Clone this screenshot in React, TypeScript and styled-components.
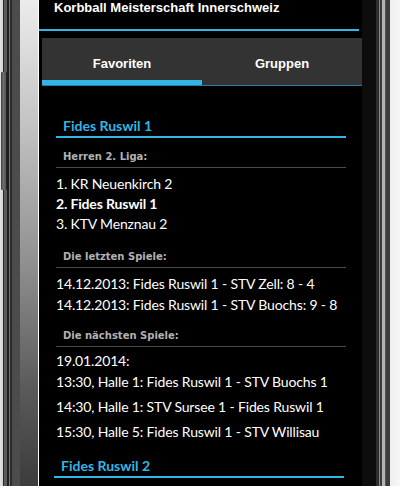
import React from "react";
import styled, { createGlobalStyle } from "styled-components";

const Global = createGlobalStyle`
  html, body { margin: 0; padding: 0; background: #ffffff; }
  body { width: 400px; height: 486px; overflow: hidden; }
`;

const Device = styled.div`
  display: flex;
  width: 400px;
  height: 486px;
  overflow: hidden;
`;

const LeftBezel = styled.div`
  position: relative;
  flex: 0 0 39px;
  background: linear-gradient(90deg,
      #e4e4e4 0px, #d0d0d0 3px,
      #2a2a2a 3px, #2a2a2a 4px,
      #5a5a5a 4px, #5a5a5a 7px,
      #1e1e1e 7px, #1e1e1e 9px,
      #777777 9px, #777777 10px,
      #2c2c2c 10px, #2c2c2c 12px,
      #4c4c4c 12px, #4c4c4c 20px,
      transparent 20px);
  &::after {
    content: "";
    position: absolute;
    left: 20px;
    top: 0;
    width: 18px;
    height: 100%;
    background: linear-gradient(180deg, #ececec 0%, #c4c4c4 25%, #8e8e8e 55%, #5a5a5a 80%, #3c3c3c 100%);
  }
`;

const SideButton = styled.div`
  position: absolute;
  left: 1px;
  top: 72px;
  width: 5px;
  height: 118px;
  border-radius: 1px;
  background: linear-gradient(90deg, #3a3a3a, #6e6e6e 40%, #585858);
  border-right: 1px solid #222;
`;

const RightBezel = styled.div`
  flex: 0 0 38px;
  background: linear-gradient(90deg,
    #0d0d0d 0px, #0d0d0d 14px,
    #2e2e2e 14px, #2e2e2e 17px,
    #888888 17px, #888888 18px,
    #3a3a3a 18px, #3a3a3a 20px,
    #b4b4b4 20px, #b4b4b4 23px,
    #555555 23px, #555555 24px,
    #3c3c3c 24px, #3c3c3c 28px,
    #efefef 28px, #f6f6f6 38px);
`;

const Screen = styled.div`
  flex: 0 0 323px;
  background: #000000;
  display: flex;
  flex-direction: column;
`;

const ActionBar = styled.div`
  height: 29px;
  margin-right: 3px;
  padding-left: 15px;
  border-bottom: 2px solid #33b5e5;
  box-sizing: content-box;
`;

const AppTitle = styled.div`
  font-family: "Liberation Sans", Arial, sans-serif;
  font-weight: bold;
  font-size: 13px;
  line-height: 15px;
  color: #ffffff;
`;

const TabBar = styled.div`
  display: flex;
  margin-top: 7px;
  margin-left: 3px;
  height: 48px;
  box-sizing: border-box;
  background: #333333;
  border-bottom: 1px solid #2b7ea3;
`;

const Tab = styled.div<{ $active?: boolean }>`
  flex: 1;
  box-sizing: border-box;
  padding-top: 18px;
  text-align: center;
  font-family: "Liberation Sans", Arial, sans-serif;
  font-weight: bold;
  font-size: 13px;
  line-height: 15px;
  color: #ffffff;
  border-bottom: 5px solid ${(p) => (p.$active ? "#33b5e5" : "transparent")};
`;

const Content = styled.div`
  margin-left: 3px;
  padding: 30px 16px 0 14px;
  font-family: Lato, "Open Sans", sans-serif;
  color: #ffffff;
`;

const TeamTitle = styled.div`
  padding-left: 7px;
  font-weight: bold;
  font-size: 14px;
  line-height: 20px;
  color: #33b5e5;
  border-bottom: 2px solid #33b5e5;
`;

const SubHeader = styled.div<{ $gap: number }>`
  margin-top: ${(p) => p.$gap}px;
  padding: 0 0 3px 7px;
  font-family: "DejaVu Sans", sans-serif;
  font-weight: bold;
  font-size: 10px;
  line-height: 14px;
  color: #b2b2b2;
  border-bottom: 1px solid #4a4a4a;
`;

const Lines = styled.div<{ $lh: number; $top: number }>`
  padding-top: ${(p) => p.$top}px;
  font-size: 14px;
  letter-spacing: -0.15px;
  line-height: ${(p) => p.$lh}px;
`;

const Line = styled.div<{ $strong?: boolean }>`
  font-weight: ${(p) => (p.$strong ? "bold" : "normal")};
  white-space: nowrap;
`;

const GameLine = styled.div`
  line-height: 22px;
  padding-bottom: 3px;
  white-space: nowrap;
`;

const NextTeam = styled(TeamTitle)`
  margin: 10px 2px 0 -2px;
`;

export default function App() {
  return (
    <>
      <Global />
      <Device>
        <LeftBezel>
          <SideButton />
        </LeftBezel>
        <Screen>
          <ActionBar>
            <AppTitle>Korbball Meisterschaft Innerschweiz</AppTitle>
          </ActionBar>
          <TabBar>
            <Tab $active>Favoriten</Tab>
            <Tab>Gruppen</Tab>
          </TabBar>
          <Content>
            <TeamTitle>Fides Ruswil 1</TeamTitle>
            <SubHeader $gap={12}>Herren 2. Liga:</SubHeader>
            <Lines $lh={20} $top={6}>
              <Line>1. KR Neuenkirch 2</Line>
              <Line $strong>2. Fides Ruswil 1</Line>
              <Line>3. KTV Menznau 2</Line>
            </Lines>
            <SubHeader $gap={16}>Die letzten Spiele:</SubHeader>
            <Lines $lh={21} $top={5}>
              <Line>14.12.2013: Fides Ruswil 1 - STV Zell: 8 - 4</Line>
              <Line>14.12.2013: Fides Ruswil 1 - STV Buochs: 9 - 8</Line>
            </Lines>
            <SubHeader $gap={14}>Die nächsten Spiele:</SubHeader>
            <Lines $lh={20} $top={4}>
              <Line>19.01.2014:</Line>
              <GameLine>13:30, Halle 1: Fides Ruswil 1 - STV Buochs 1</GameLine>
              <GameLine>14:30, Halle 1: STV Sursee 1 - Fides Ruswil 1</GameLine>
              <GameLine>15:30, Halle 5: Fides Ruswil 1 - STV Willisau</GameLine>
            </Lines>
            <NextTeam>Fides Ruswil 2</NextTeam>
          </Content>
        </Screen>
        <RightBezel />
      </Device>
    </>
  );
}
